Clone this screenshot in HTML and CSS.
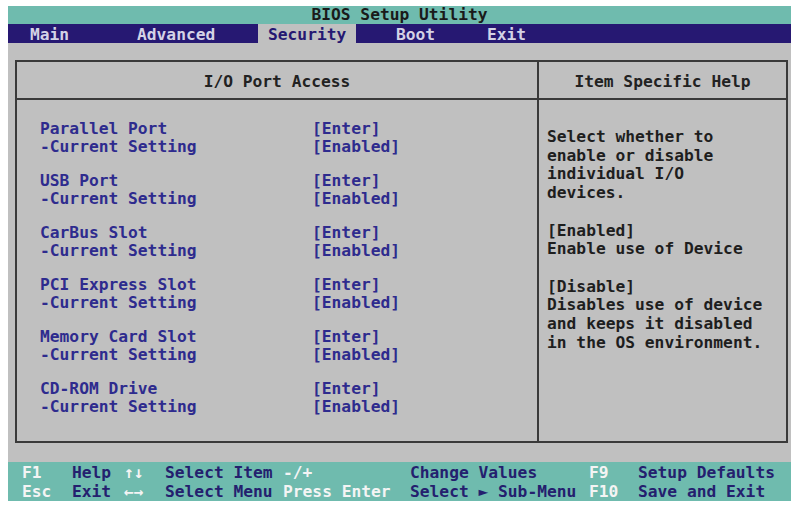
FILE: index.html
```html
<!DOCTYPE html>
<html>
<head>
<meta charset="utf-8">
<link rel="stylesheet" href="styles.css">
</head>
<body>
<div class="screen">
  <div class="title">BIOS Setup Utility</div>
  <div class="menu">
    <span class="mi">Main</span>
    <span class="mi">Advanced</span>
    <span class="mi active">Security</span>
    <span class="mi">Boot</span>
    <span class="mi">Exit</span>
  </div>
  <div class="work">
    <div class="box">
      <div class="head left-head">I/O Port Access</div>
      <div class="head right-head">Item Specific Help</div>
      <div class="items">
        <div class="group">
          <div class="row"><span class="name">Parallel Port</span><span class="val">[Enter]</span></div>
          <div class="row"><span class="name">-Current Setting</span><span class="val">[Enabled]</span></div>
        </div>
        <div class="group">
          <div class="row"><span class="name">USB Port</span><span class="val">[Enter]</span></div>
          <div class="row"><span class="name">-Current Setting</span><span class="val">[Enabled]</span></div>
        </div>
        <div class="group">
          <div class="row"><span class="name">CarBus Slot</span><span class="val">[Enter]</span></div>
          <div class="row"><span class="name">-Current Setting</span><span class="val">[Enabled]</span></div>
        </div>
        <div class="group">
          <div class="row"><span class="name">PCI Express Slot</span><span class="val">[Enter]</span></div>
          <div class="row"><span class="name">-Current Setting</span><span class="val">[Enabled]</span></div>
        </div>
        <div class="group">
          <div class="row"><span class="name">Memory Card Slot</span><span class="val">[Enter]</span></div>
          <div class="row"><span class="name">-Current Setting</span><span class="val">[Enabled]</span></div>
        </div>
        <div class="group">
          <div class="row"><span class="name">CD-ROM Drive</span><span class="val">[Enter]</span></div>
          <div class="row"><span class="name">-Current Setting</span><span class="val">[Enabled]</span></div>
        </div>
      </div>
      <div class="help">
        <p>Select whether to<br>enable or disable<br>individual I/O<br>devices.</p>
        <p>[Enabled]<br>Enable use of Device</p>
        <p>[Disable]<br>Disables use of device<br>and keeps it disabled<br>in the OS environment.</p>
      </div>
    </div>
  </div>
  <div class="footer">
    <div class="frow">
      <span class="k c1">F1</span><span class="l c2">Help</span><span class="k c3">↑↓</span><span class="l c4">Select Item</span><span class="k c5">-/+</span><span class="l c6">Change Values</span><span class="k c7">F9</span><span class="l">Setup Defaults</span>
    </div>
    <div class="frow">
      <span class="k c1">Esc</span><span class="l c2">Exit</span><span class="k c3">←→</span><span class="l c4">Select Menu</span><span class="k c5">Press Enter</span><span class="l c6">Select ► Sub-Menu</span><span class="k c7">F10</span><span class="l">Save and Exit</span>
    </div>
  </div>
</div>
</body>
</html>
```
FILE: styles.css
```css
html, body {
  margin: 0;
  padding: 0;
  background: #ffffff;
}
body {
  padding: 6px 5px 6px 8px;
  font-family: "DejaVu Sans Mono", "Liberation Mono", monospace;
  font-weight: bold;
  font-size: 16.25px;
}
.screen {
  width: 783px;
  height: 495px;
  display: flex;
  flex-direction: column;
  background: #c0c0c0;
}
.title {
  height: 18px;
  line-height: 18px;
  background: #6fbbae;
  color: #1a1a1a;
  text-align: center;
}
.menu {
  height: 19px;
  background: #261872;
  color: #d4d2e6;
  display: grid;
  grid-template-columns: 107px 129px 130px 91px auto;
  padding-left: 14px;
}
.mi {
  justify-self: start;
  padding: 2px 8px 0 8px;
  height: 17px;
  line-height: 17px;
}
.mi.active {
  background: #c0c0c0;
  color: #261872;
  padding: 2px 10px 0 10px;
  width: 78px;
}
.work {
  flex: 1;
  padding: 17px 3px 19px 7px;
  display: flex;
}
.box {
  flex: 1;
  border: 2px solid #3a3a3a;
  display: grid;
  grid-template-columns: 522px auto;
  grid-template-rows: 38px auto;
}
.head {
  display: flex;
  align-items: center;
  justify-content: center;
  padding-top: 3px;
  color: #222222;
  border-bottom: 2px solid #3a3a3a;
}
.left-head {
  border-right: 2px solid #3a3a3a;
}
.items {
  border-right: 2px solid #3a3a3a;
  padding: 20px 0 0 23px;
  color: #2e2b8e;
  display: flex;
  flex-direction: column;
  gap: 16.5px;
}
.row {
  height: 17.8px;
  line-height: 17.8px;
  display: flex;
}
.name {
  width: 272px;
}
.help {
  padding: 28px 0 0 8px;
  color: #1e1e1e;
  line-height: 18.7px;
}
.help p {
  margin: 0 0 18.7px 0;
}
.footer {
  height: 39px;
  background: #6fbbae;
  padding-top: 2px;
  box-sizing: border-box;
}
.frow {
  height: 18.5px;
  line-height: 18.5px;
  display: flex;
  padding-left: 14px;
}
.k { color: #f4f4f4; }
.l { color: #24206e; }
.c1 { width: 50px; }
.c2 { width: 52px; }
.c3 { width: 41px; }
.c4 { width: 118px; }
.c5 { width: 127px; }
.c6 { width: 179px; }
.c7 { width: 49px; }
```
